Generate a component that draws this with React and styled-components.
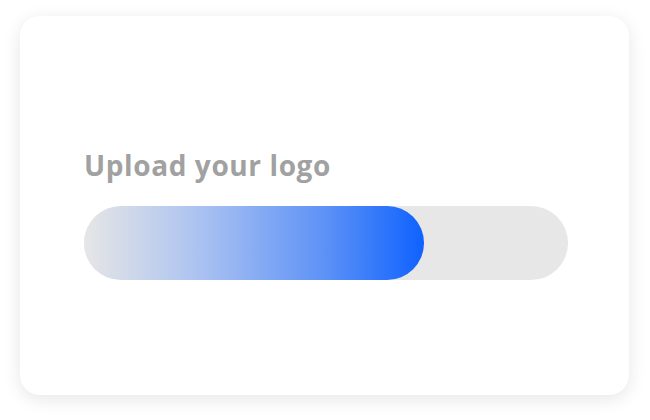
import React from 'react';
import styled, { createGlobalStyle } from 'styled-components';

const GlobalStyle = createGlobalStyle`
  html, body {
    margin: 0;
    padding: 0;
    background: #ffffff;
    width: 650px;
    height: 420px;
    overflow: hidden;
  }
`;

const Page = styled.div`
  padding: 16px 21px 25px 20px;
`;

const Card = styled.div`
  box-sizing: border-box;
  width: 609px;
  height: 379px;
  background: #ffffff;
  border-radius: 20px;
  box-shadow: 0 4px 18px rgba(0, 0, 0, 0.1);
  padding: 131px 61px 0 64px;
  display: flex;
  flex-direction: column;
  gap: 23px;
`;

const Title = styled.h2`
  margin: 0;
  font-family: 'Open Sans', Lato, sans-serif;
  font-weight: 700;
  font-size: 28px;
  line-height: 36px;
  letter-spacing: 0.6px;
  color: #a1a1a1;
`;

const Track = styled.div`
  height: 74px;
  border-radius: 37px;
  background: #e7e7e7;
  overflow: hidden;
`;

const Fill = styled.div`
  height: 100%;
  border-radius: 37px;
  background: linear-gradient(90deg, #e6e6e6 0%, #a9c1f1 35%, #5f93f6 70%, #0f62fe 100%);
`;

export default function App() {
  const progress = 70.2;
  return (
    <Page>
      <GlobalStyle />
      <Card>
        <Title>Upload your logo</Title>
        <Track>
          <Fill style={{ width: `${progress}%` }} />
        </Track>
      </Card>
    </Page>
  );
}
